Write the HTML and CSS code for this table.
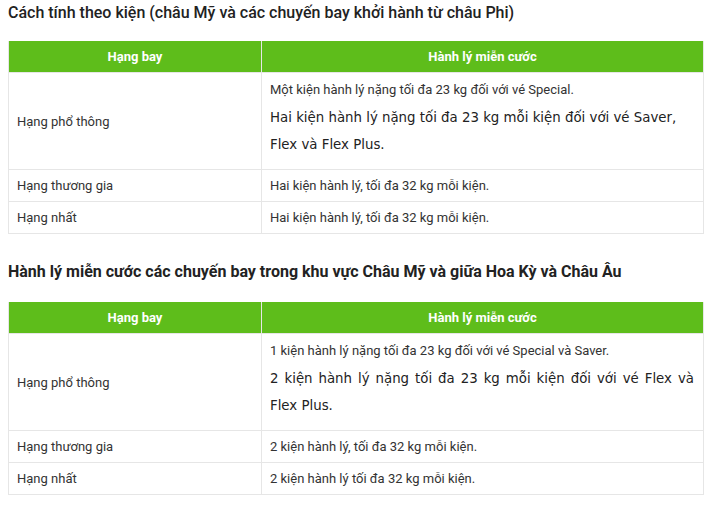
FILE: index.html
```html
<!DOCTYPE html>
<html lang="vi">
<head>
<meta charset="utf-8">
<link rel="stylesheet" href="styles.css">
</head>
<body>
<section class="block first">
<h2 class="title">Cách tính theo kiện (châu Mỹ và các chuyến bay khởi hành từ châu Phi)</h2>
<table class="bag">
<colgroup><col class="c1"><col class="c2"></colgroup>
<thead><tr><th>Hạng bay</th><th>Hành lý miễn cước</th></tr></thead>
<tbody>
<tr class="tall"><td>Hạng phổ thông</td><td><p class="p1">Một kiện hành lý nặng tối đa 23 kg đối với vé Special.</p><p class="p2">Hai kiện hành lý nặng tối đa 23 kg mỗi kiện đối với vé Saver, Flex và Flex Plus.</p></td></tr>
<tr><td>Hạng thương gia</td><td>Hai kiện hành lý, tối đa 32 kg mỗi kiện.</td></tr>
<tr><td>Hạng nhất</td><td>Hai kiện hành lý, tối đa 32 kg mỗi kiện.</td></tr>
</tbody>
</table>
</section>
<section class="block second">
<h2 class="title t2">Hành lý miễn cước các chuyến bay trong khu vực Châu Mỹ và giữa Hoa Kỳ và Châu Âu</h2>
<table class="bag">
<colgroup><col class="c1"><col class="c2"></colgroup>
<thead><tr><th>Hạng bay</th><th>Hành lý miễn cước</th></tr></thead>
<tbody>
<tr class="tall"><td>Hạng phổ thông</td><td><p class="p1">1 kiện hành lý nặng tối đa 23 kg đối với vé Special và Saver.</p><p class="p2 just">2 kiện hành lý nặng tối đa 23 kg mỗi kiện đối với vé Flex và Flex Plus.</p></td></tr>
<tr><td>Hạng thương gia</td><td>2 kiện hành lý, tối đa 32 kg mỗi kiện.</td></tr>
<tr><td>Hạng nhất</td><td>2 kiện hành lý tối đa 32 kg mỗi kiện.</td></tr>
</tbody>
</table>
</section>
</body>
</html>
```

FILE: styles.css
```css
html, body {
  margin: 0;
  background: #fff;
}
body {
  padding: 0 8px;
  font-family: Roboto, "Liberation Sans", sans-serif;
  color: #333;
}
.block.second {
  margin-top: 25px;
}
.title {
  margin: 0 0 15px;
  font-size: 16px;
  line-height: 26px;
  font-weight: 500;
  color: #222;
}
.t2 {
  margin-bottom: 17px;
  font-weight: 700;
}
.bag {
  width: 696px;
  border-collapse: collapse;
  table-layout: fixed;
  font-size: 13px;
}
.c1 { width: 253px; }
.bag th {
  background: #5ebd1b;
  color: #fff;
  font-weight: 700;
  font-size: 13px;
  line-height: 18px;
  padding: 7px 8px 6px;
  border: 1px solid #e6e6e6;
  border-top: 0;
  text-align: center;
}
.bag td {
  border: 1px solid #e6e6e6;
  padding: 6px 9px 6px 8px;
  line-height: 19px;
  vertical-align: middle;
}
.bag tr.tall td {
  padding-top: 7px;
  padding-bottom: 7px;
}
.p1 {
  margin: 0 0 4px;
  line-height: 20px;
}
.p2 {
  margin: 0 0 4px;
  font-family: "DejaVu Sans", Verdana, sans-serif;
  font-size: 13.33px;
  line-height: 27px;
  color: #222;
}
.just {
  text-align: justify;
}
```
